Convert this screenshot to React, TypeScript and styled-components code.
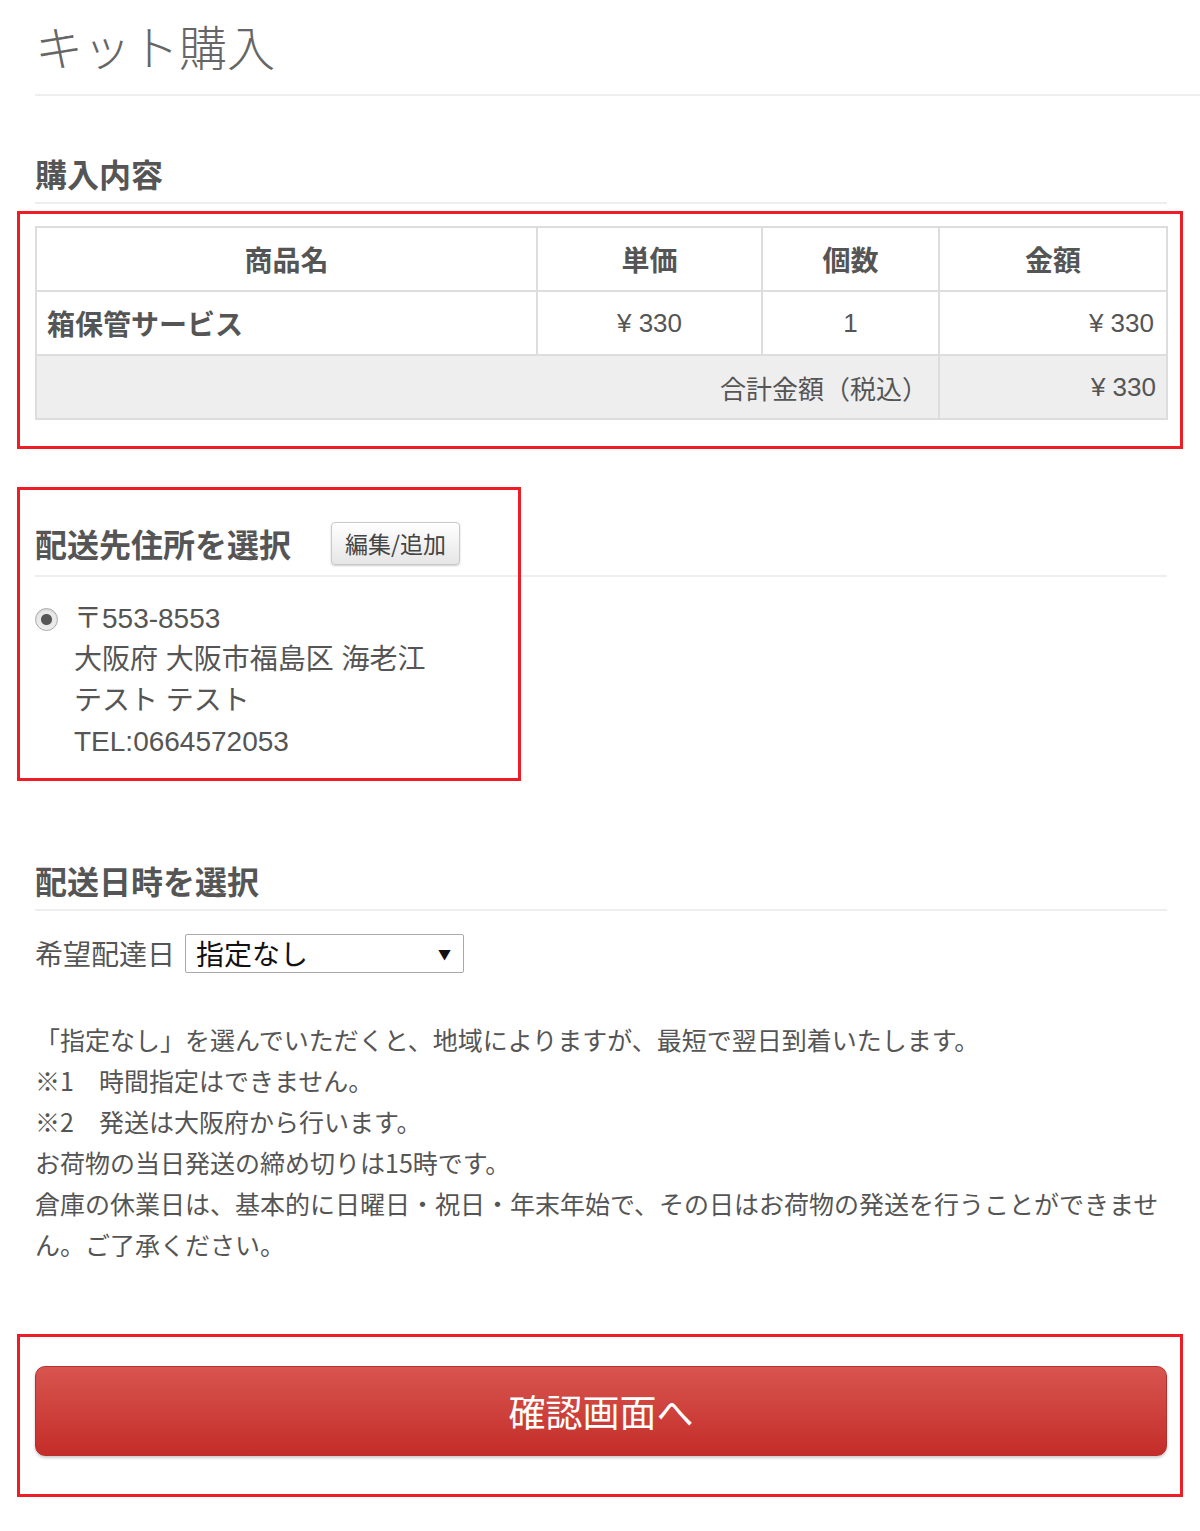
import styled, { createGlobalStyle } from 'styled-components'

const GlobalStyle = createGlobalStyle`
  html, body {
    margin: 0;
    padding: 0;
    background: #fff;
  }
  body {
    font-family: "Noto Sans CJK JP", "Liberation Sans", sans-serif;
    color: #555;
  }
`

const Page = styled.div`
  position: relative;
  width: 1200px;
  min-height: 1531px;
  padding: 16px 0 0 35px;
  box-sizing: border-box;
`

const Title = styled.h1`
  margin: 0;
  padding-bottom: 20px;
  font-size: 48px;
  line-height: 58px;
  font-weight: 300;
  color: #666;
  border-bottom: 2px solid #eee;
`

const Section = styled.section<{ $top: number }>`
  width: 1132px;
  margin-top: ${({ $top }) => $top}px;
`

const Heading = styled.h2`
  margin: 0;
  padding-bottom: 9px;
  font-size: 32px;
  line-height: 40px;
  font-weight: 700;
  color: #555;
  border-bottom: 2px solid #eee;
`

const HeadingRow = styled.div`
  display: flex;
  align-items: center;
  gap: 40px;
  height: 46px;
  padding-bottom: 9px;
  border-bottom: 2px solid #eee;

  h2 {
    margin: 0;
    font-size: 32px;
    line-height: 40px;
    font-weight: 700;
    color: #555;
  }
`

const EditButton = styled.button`
  width: 129px;
  height: 43px;
  padding: 0;
  font-family: "Noto Sans CJK JP", sans-serif;
  font-size: 23px;
  color: #444;
  background: linear-gradient(#ffffff, #e6e6e6);
  border: 1px solid #c8c8c8;
  border-radius: 4px;
  box-shadow: 0 1px 2px rgba(0, 0, 0, 0.2);
`

const Table = styled.table`
  margin-top: 22px;
  width: 1131px;
  table-layout: fixed;
  border-collapse: collapse;
  font-size: 26px;
  color: #555;

  th, td {
    box-sizing: border-box;
    border: 2px solid #ddd;
    height: 64px;
    padding: 0 12px;
  }
`

const HeadCell = styled.th<{ $w: number }>`
  width: ${({ $w }) => $w}px;
  font-size: 28px;
  font-weight: 700;
  text-align: center;
`

const ItemName = styled.th`
  text-align: left;
  font-size: 28px;
  font-weight: 700;
  padding-left: 10px !important;
`

const Cell = styled.td<{ $align?: string }>`
  text-align: ${({ $align }) => $align || 'center'};
  font-family: "Liberation Sans", "Noto Sans CJK JP", sans-serif;
`

const TotalRow = styled.tr`
  background: #eee;

  td {
    text-align: right;
    padding-right: 10px;
  }
`

const AddressOption = styled.div`
  display: flex;
  gap: 16px;
  margin-top: 21px;
`

const Radio = styled.span`
  flex: none;
  width: 21px;
  height: 21px;
  margin-top: 10px;
  border-radius: 50%;
  border: 1px solid #aaa;
  background: radial-gradient(circle, #555 0, #555 5px, #e6e6e6 6px, #fafafa 100%);
  box-shadow: inset 0 1px 2px rgba(0, 0, 0, 0.15);
`

const Address = styled.div`
  font-family: "Liberation Sans", "Noto Sans CJK JP", sans-serif;
  font-size: 28px;
  line-height: 41px;
  color: #555;
`

const DateRow = styled.div`
  display: flex;
  align-items: center;
  gap: 10px;
  margin-top: 22px;
  font-size: 28px;
`

const SelectBox = styled.div`
  display: flex;
  align-items: center;
  justify-content: space-between;
  box-sizing: border-box;
  width: 279px;
  height: 39px;
  padding: 0 12px 0 10px;
  border: 1px solid #a9a9a9;
  border-radius: 2px;
  color: #111;
  font-size: 28px;

  span {
    font-size: 13px;
  }
`

const Notes = styled.div`
  width: 1132px;
  margin-top: 46px;
  font-size: 25px;
  line-height: 41px;
  color: #555;

  p {
    margin: 0;
  }
`

const SubmitButton = styled.button`
  display: block;
  width: 1132px;
  height: 90px;
  margin-top: 101px;
  font-family: "Noto Sans CJK JP", sans-serif;
  font-size: 37px;
  color: #fff;
  background: linear-gradient(#d8554f, #c42d29);
  border: 1px solid #b8302c;
  border-radius: 10px;
  box-shadow: 0 2px 3px rgba(0, 0, 0, 0.2);
`

const Frame = styled.div<{ $x: number; $y: number; $w: number; $h: number }>`
  position: absolute;
  left: ${({ $x }) => $x}px;
  top: ${({ $y }) => $y}px;
  width: ${({ $w }) => $w}px;
  height: ${({ $h }) => $h}px;
  box-sizing: border-box;
  border: 3px solid #ee1c25;
  pointer-events: none;
`

export default function App() {
  return (
    <Page>
      <GlobalStyle />
      <Title>キット購入</Title>

      <Section $top={57}>
        <Heading>購入内容</Heading>
        <Table>
          <thead>
            <tr>
              <HeadCell $w={501}>商品名</HeadCell>
              <HeadCell $w={225}>単価</HeadCell>
              <HeadCell $w={177}>個数</HeadCell>
              <HeadCell $w={228}>金額</HeadCell>
            </tr>
          </thead>
          <tbody>
            <tr>
              <ItemName>箱保管サービス</ItemName>
              <Cell>¥ 330</Cell>
              <Cell>1</Cell>
              <Cell $align="right">¥ 330</Cell>
            </tr>
            <TotalRow>
              <td colSpan={3}>合計金額（税込）</td>
              <Cell $align="right">¥ 330</Cell>
            </TotalRow>
          </tbody>
        </Table>
      </Section>

      <Section $top={100}>
        <HeadingRow>
          <h2>配送先住所を選択</h2>
          <EditButton>編集/追加</EditButton>
        </HeadingRow>
        <AddressOption>
          <Radio />
          <Address>
            〒553-8553
            <br />
            大阪府 大阪市福島区 海老江
            <br />
            テスト テスト
            <br />
            TEL:0664572053
          </Address>
        </AddressOption>
      </Section>

      <Section $top={98}>
        <Heading>配送日時を選択</Heading>
        <DateRow>
          希望配達日
          <SelectBox>
            指定なし
            <span>▼</span>
          </SelectBox>
        </DateRow>
        <Notes>
          <p>「指定なし」を選んでいただくと、地域によりますが、最短で翌日到着いたします。</p>
          <p>※1　時間指定はできません。</p>
          <p>※2　発送は大阪府から行います。</p>
          <p>お荷物の当日発送の締め切りは15時です。</p>
          <p>
            倉庫の休業日は、基本的に日曜日・祝日・年末年始で、その日はお荷物の発送を行うことができません。ご了承ください。
          </p>
        </Notes>
        <SubmitButton>確認画面へ</SubmitButton>
      </Section>

      <Frame $x={17} $y={211} $w={1166} $h={238} />
      <Frame $x={17} $y={487} $w={504} $h={294} />
      <Frame $x={17} $y={1334} $w={1166} $h={163} />
    </Page>
  )
}
